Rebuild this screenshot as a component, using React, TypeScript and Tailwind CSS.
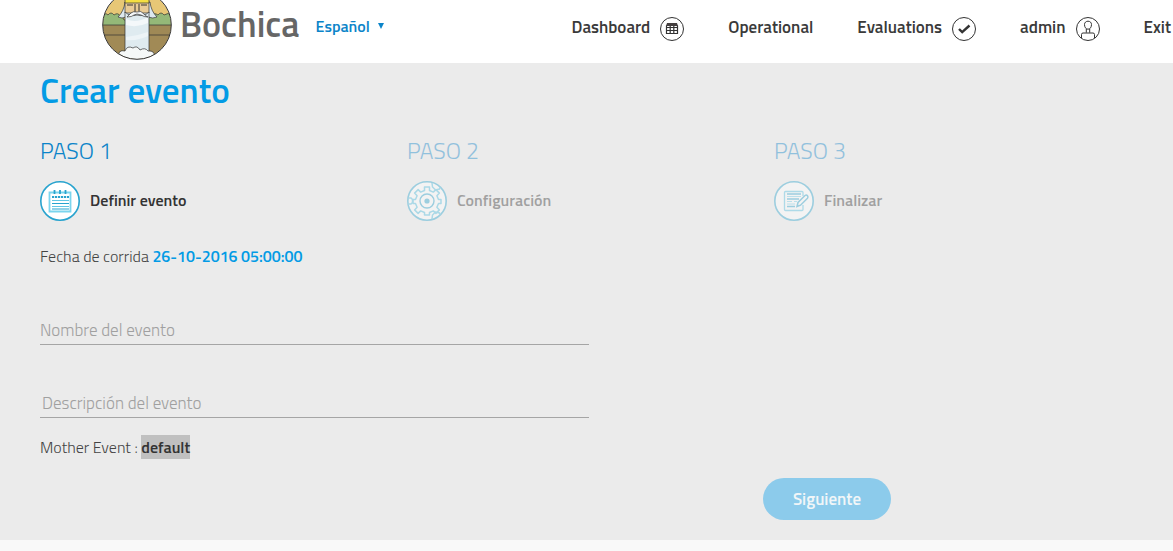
import { useState } from 'react';
import type { ReactNode } from 'react';
import { clsx } from 'clsx';

interface StepProps {
  title: string;
  label: string;
  icon: ReactNode;
  active?: boolean;
}

function Logo() {
  return (
    <svg viewBox="0 0 70 70" className="size-[70px] shrink-0" aria-hidden="true">
      <defs>
        <clipPath id="logo-disc">
          <circle cx="35" cy="35" r="34" />
        </clipPath>
      </defs>
      <g clipPath="url(#logo-disc)" stroke="#333" strokeWidth="0.7">
        <rect width="70" height="70" fill="#e7c776" stroke="none" />
        <path d="M0 26q3-4 6-1q3-4 6 0q4-3 6 1q3 0 4 4h24q0-4 4-4q2-4 6-1q3-4 6 0q4-3 8 0V38H0Z" fill="#94b878" />
        <rect x="-1" y="35" width="72" height="11" fill="#9f8956" />
        <rect x="-1" y="45" width="72" height="26" fill="#a18a56" />
        <path d="M23 12q-1 9-7 15q4 2 8 0h22q5 2 9 0q-6-6-7-15Z" fill="#dce8ef" />
        <path d="M23 12h24v11H23Z" fill="#e9cb96" />
        <path d="M23 22q5 5 12 3q7 2 12-3v40H23Z" fill="#dfebf0" />
        <path d="M24 29q10 5 22-2v6q-11 5-22 2Z" fill="#f4f8fa" stroke="none" />
        <path d="M24 47q11-1 22-5v4q-10 5-22 4Z" fill="#edf4f7" stroke="none" />
        <path d="M33 14v8M37 14v8M25 15h6M39 15h6" fill="none" strokeWidth="1" />
        <path d="M35 22q-4-1-6 1t-4 4q5 0 7-2l3-1l4 1q3 2 7 2q-3-1-4-3q-3-4-7-2Z" fill="#f5f8fa" />
        <path d="M23 7h24v6H23Z" fill="#f5df42" />
        <path d="M16 68q0-9 7-7q2-6 8-3q4-3 7 2q5-3 8 1q7-1 7 7v4H16Z" fill="#f5f8f8" />
      </g>
      <circle cx="35" cy="35" r="34.3" fill="none" stroke="#333" strokeWidth="1" />
    </svg>
  );
}

function TableIcon() {
  return (
    <svg viewBox="0 0 24 24" className="size-6" fill="none" stroke="#333" aria-hidden="true">
      <circle cx="12" cy="12" r="11.5" />
      <path d="M7 6h10l1 3H6Z" fill="#443f3f" stroke="none" />
      <path d="M6.500 8.500v8h11v-8M6.500 10.500h11M6.500 13.500h11M10.200 9v7M13.800 9v7" strokeWidth="1.200" />
    </svg>
  );
}

function CheckIcon() {
  return (
    <svg viewBox="0 0 24 24" className="size-6" fill="none" stroke="#333" aria-hidden="true">
      <circle cx="12" cy="12" r="11.5" />
      <path d="M7 12l3.2 3.2L17.5 8.5" strokeWidth="2.4" />
    </svg>
  );
}

function UserIcon() {
  return (
    <svg viewBox="0 0 24 24" className="size-6" fill="none" stroke="#333" aria-hidden="true">
      <circle cx="12" cy="12" r="11.5" />
      <path d="M8.5 7.5C8.5 5.5 10 4.2 12 4.2s3.5 1.3 3.5 3.3c0 2.5-1.200 4.700-3.500 4.700S8.500 10 8.500 7.500ZM10.300 11.700v4M13.700 11.700v4M5.500 21v-3.500q0-1.500 1.500-1.500h10q1.500 0 1.500 1.500V21" />
    </svg>
  );
}

function CalendarIcon() {
  return (
    <svg viewBox="0 0 40 40" className="size-10 shrink-0" fill="none" aria-hidden="true">
      <circle cx="20" cy="20" r="19.200" fill="#fff" stroke="#28a3ce" strokeWidth="1.600" />
      <path d="M9.500 11.500h21v19h-21Z" stroke="#7bd5ee" strokeWidth="1.800" />
      <path d="M14.500 9v4M20 9v4M25.500 9v4" stroke="#28a3ce" strokeWidth="1.800" />
      <path d="M12 16h17" stroke="#28a3ce" strokeWidth="1.800" strokeDasharray="2.200 0.800" />
      <path d="M12 19.500h17M12 25.500h17" stroke="#62c6e4" strokeWidth="1.200" />
      <path d="M12 22.500h17M12 28h17" stroke="#28a3ce" strokeWidth="1.200" />
    </svg>
  );
}

function GearIcon() {
  return (
    <svg viewBox="0 0 40 40" className="size-10 shrink-0" fill="none" aria-hidden="true">
      <defs>
        <clipPath id="gear-disc">
          <circle cx="20" cy="20" r="19" />
        </clipPath>
      </defs>
      <circle cx="20" cy="20" r="19.200" fill="#fff" stroke="#28a3ce" strokeWidth="1.600" />
      <path
        d="M17.500 6h5v3.500l3.800 1.600 2.600-2.500 3.500 3.500-2.500 2.600 1.600 3.800H34v4h-2.500l-1.600 3.800 2.500 2.600-3.500 3.500-2.600-2.500-3.800 1.600V34h-5v-2.500l-3.800-1.600-2.600 2.500-3.500-3.500 2.500-2.600-1.600-3.800H6v-4h2.500l1.600-3.800-2.500-2.600 3.500-3.500 2.600 2.500 3.800-1.600Z"
        stroke="#4dbfe2"
        strokeWidth="1.500"
        strokeLinejoin="round"
      />
      <circle cx="20" cy="20" r="7" stroke="#28a3ce" strokeWidth="1.400" />
      <circle cx="20" cy="20" r="2.600" fill="#28a3ce" />
      <g clipPath="url(#gear-disc)" stroke="#4dbfe2" strokeWidth="1.500">
        <path d="M1 17h3l1.500 1.500v3L4 23H1M25 2l.5 4 3 3 4-1 1-3M25 38l.5-4 3-3 4 1 1 3" />
      </g>
    </svg>
  );
}

function EditIcon() {
  return (
    <svg viewBox="0 0 40 40" className="size-10 shrink-0" fill="none" aria-hidden="true">
      <circle cx="20" cy="20" r="19.200" fill="#fff" stroke="#28a3ce" strokeWidth="1.600" />
      <path d="M29 15v-3.500a1 1 0 0 0-1-1H11.500a1 1 0 0 0-1 1v17a1 1 0 0 0 1 1H28a1 1 0 0 0 1-1V24" stroke="#55c3e5" strokeWidth="1.300" />
      <path d="M13 13h14M13 18h12M13 25.500h8" stroke="#28a3ce" strokeWidth="1.300" />
      <path d="M13 15.500h14M13 20.500h5M20 20.500h3M13 23h8" stroke="#75d2ed" />
      <path d="M23 25.500l1-4 7-7q1.500-1 2.500.3t0 2.400l-7 7Z" fill="#fff" stroke="#28a3ce" strokeWidth="1.500" />
    </svg>
  );
}

const NAV_ITEMS = [
  { label: 'Dashboard', icon: <TableIcon /> },
  { label: 'Operational' },
  { label: 'Evaluations', icon: <CheckIcon /> },
  { label: 'admin', icon: <UserIcon /> },
  { label: 'Exit' },
];

function Header() {
  return (
    <header className="flex h-[63px] items-start justify-between bg-white pl-[102px] pr-0.5">
      <div className="flex shrink-0 items-start">
        <div className="-mt-2.5">
          <Logo />
        </div>
        <span className="ml-2 text-[36px] font-semibold leading-12 text-[#666]">Bochica</span>
        <div className="ml-4 mt-3.5 flex items-center gap-2 text-[#0b84c9]">
          <select
            aria-label="Idioma"
            className="field-sizing-content appearance-none bg-transparent text-base font-semibold leading-6"
          >
            <option>Español</option>
          </select>
          <svg viewBox="0 0 6 6" className="size-1.5" fill="currentColor" aria-hidden="true">
            <path d="M0 0h6L3 6Z" />
          </svg>
        </div>
      </div>
      <nav className="flex shrink-0 gap-11 pt-[15px]">
        {NAV_ITEMS.map((item) => (
          <a key={item.label} href="#" className="flex gap-2.5 text-[17px] font-semibold leading-6 text-[#3a3a3a]">
            {item.label}
            {item.icon && <span className="pt-0.5">{item.icon}</span>}
          </a>
        ))}
      </nav>
    </header>
  );
}

function Step({ title, label, icon, active = false }: StepProps) {
  return (
    <li className={clsx(!active && 'opacity-40')}>
      <h2 className="text-[23px] font-light leading-8 text-[#0b84c9]">{title}</h2>
      <div className="mt-3.5 flex items-center gap-2.5">
        {icon}
        <span className="pb-0.5 text-base font-semibold text-[#333]">{label}</span>
      </div>
    </li>
  );
}

export default function App() {
  const [name, setName] = useState('');
  const [description, setDescription] = useState('');

  return (
    <div className="min-h-screen bg-[#f9f9f9] font-['Titillium_Web',Roboto,sans-serif]">
      <Header />
      <main className="bg-[#ebebeb] pb-5 pl-10 pr-9 pt-[3px]">
        <h1 className="text-[35px] font-semibold leading-12 text-[#039be5]">Crear evento</h1>

        <ol className="-mr-1 mt-[21px] grid grid-cols-3">
          <Step title="PASO 1" label="Definir evento" icon={<CalendarIcon />} active />
          <Step title="PASO 2" label="Configuración" icon={<GearIcon />} />
          <Step title="PASO 3" label="Finalizar" icon={<EditIcon />} />
        </ol>

        <form onSubmit={(e) => e.preventDefault()}>
          <p className="mt-[23px] text-base font-light leading-6 text-[#444]">
            Fecha de corrida <strong className="font-semibold text-[#039be5]">26-10-2016 05:00:00</strong>
          </p>

          <div className="w-1/2">
            <input
              type="text"
              aria-label="Nombre del evento"
              placeholder="Nombre del evento"
              value={name}
              onChange={(e) => setName(e.target.value)}
              className="mt-[45px] block h-8 w-full border-b border-[#a5a5a5] pt-0.5 text-[17px] font-light outline-none placeholder:text-[#a0a0a0]"
            />
            <input
              type="text"
              aria-label="Descripción del evento"
              placeholder="Descripción del evento"
              value={description}
              onChange={(e) => setDescription(e.target.value)}
              className="mt-[41px] block h-8 w-full border-b border-[#a5a5a5] pl-0.5 pt-0.5 text-[17px] font-light outline-none placeholder:text-[#a0a0a0]"
            />
          </div>

          <p className="mt-[17px] text-base font-light leading-6 text-[#444]">
            Mother Event : <strong className="inline-block bg-[#c0c0c0] font-semibold text-[#333]">default</strong>
          </p>

          <div className="mt-[19px] flex justify-end pr-[246px]">
            <button
              type="submit"
              className="h-[42px] w-32 rounded-full bg-[#8ccbeb] pt-0.5 text-[17px] font-semibold text-[#f1f6f8]"
            >
              Siguiente
            </button>
          </div>
        </form>
      </main>
    </div>
  );
}
